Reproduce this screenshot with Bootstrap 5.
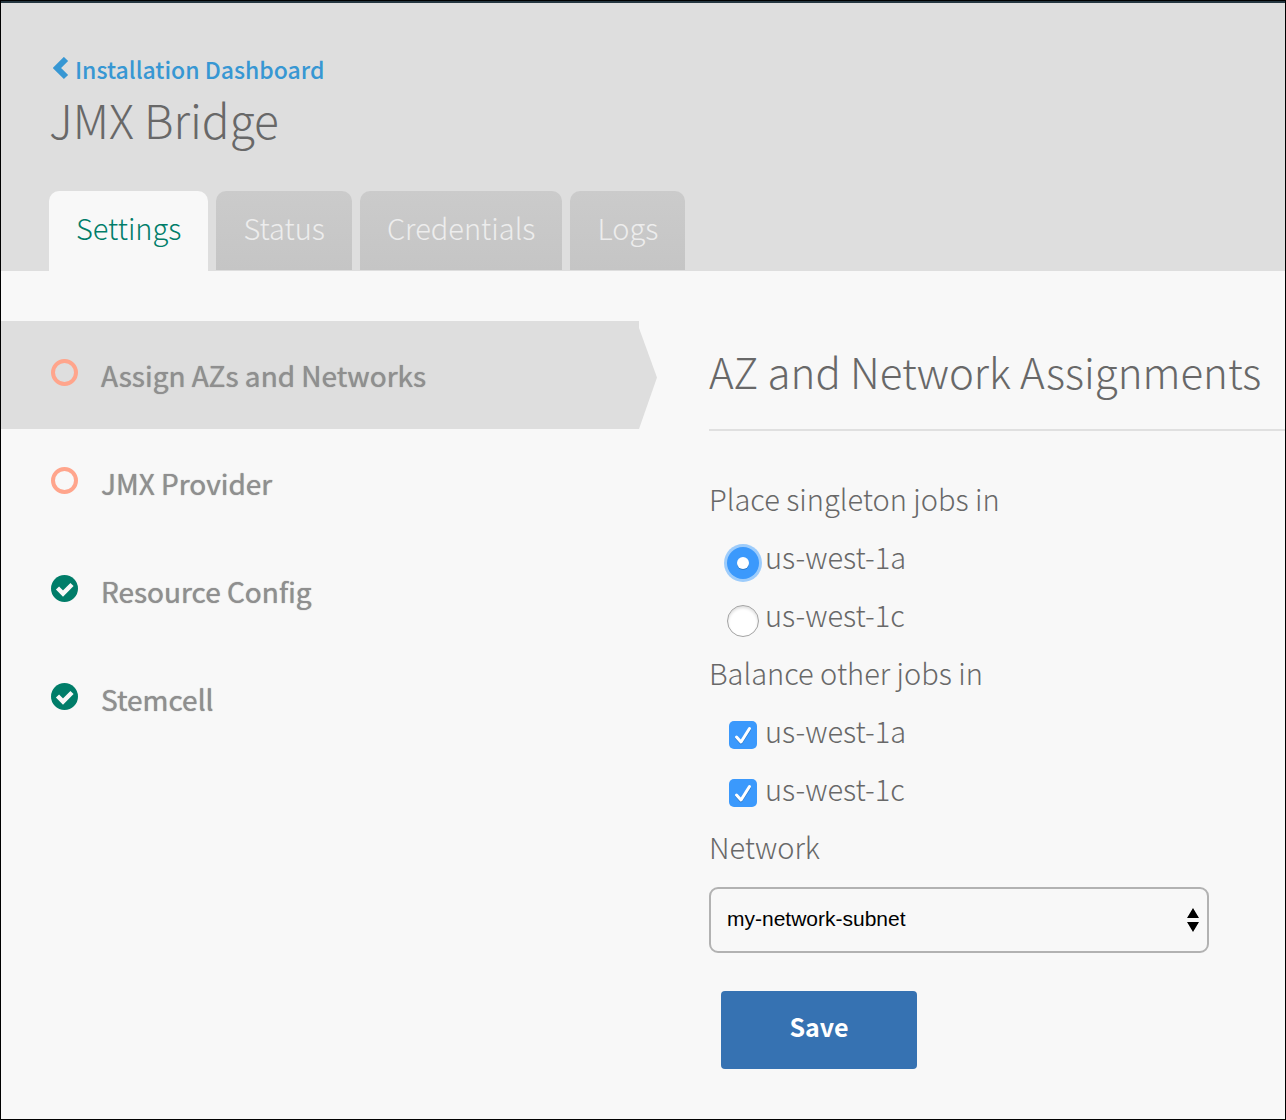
<!DOCTYPE html>
<html lang="en">
<head>
<meta charset="utf-8">
<meta name="viewport" content="width=device-width, initial-scale=1">
<title>JMX Bridge</title>
<link href="https://cdn.jsdelivr.net/npm/bootstrap@5.3.0/dist/css/bootstrap.min.css" rel="stylesheet">
<style>
  body {
    font-family: "Noto Sans CJK SC", "Open Sans", sans-serif;
    font-size: 29px;
    font-weight: 300;
    line-height: 58px;
    color: #686868;
    background: #f8f8f8;
    border: 1px solid #000;
    min-height: 100vh;
  }
  .page-head { background: #dedede; border-top: 2px solid #243640; padding: 48px 48px 0; }
  .back-link { color: #3797d3; font-size: 23px; font-weight: 500; line-height: 36px; gap: 6px; padding-left: 4px; }
  .page-title { font-size: 46px; font-weight: 300; line-height: 64px; margin: 0 0 40px; }
  .product-tabs { --bs-nav-tabs-border-width: 0; border: 0; gap: 8px; }
  .product-tabs .nav-link {
    line-height: 72px; padding: 0 27px 7px; margin-bottom: 1px;
    color: #ededed; background: linear-gradient(#cbcbcb, #c5c5c5); border-radius: 10px 10px 0 0;
  }
  .product-tabs .nav-link.active { color: #007d69; background: #f8f8f8; margin-bottom: 0; padding-bottom: 8px; }
  .page-body { padding-top: 50px; }
  .side-nav { padding-right: 4px; }
  .side-nav .nav-link {
    position: relative; height: 108px; padding: 0 50px; gap: 23px;
    font-size: 28px; font-weight: 400; color: #8f8f8f; text-shadow: 0 0 1px #8f8f8f;
  }
  .side-nav .nav-link svg { margin-bottom: 6px; }
  .side-nav .nav-link.active { background: #dedede; }
  .side-nav .nav-link.active::after {
    content: ""; position: absolute; left: 100%; top: 7px; bottom: 0; width: 18px;
    background: #dedede; clip-path: polygon(0 0, 100% 49%, 0 100%);
  }
  .form-pane { padding-left: 66px; }
  .pane-title { font-size: 42px; font-weight: 300; line-height: 100px; padding-bottom: 8px; border-bottom: 2px solid #e0e0e0; margin: 0 0 38px; white-space: nowrap; }
  .choice { height: 58px; padding-left: 15px; gap: 3px; }
  .choice-box { width: 38px; padding-top: 14px; }
  .choice .form-check-input { margin: 0; float: none; box-shadow: none; }
  .choice input[type=radio] { width: 32px; height: 32px; border: 1px solid #a3a3a3; background-color: #fff; box-shadow: inset 0 2px 3px #ddd; }
  .choice input[type=radio]:checked {
    border: 0; background-color: #3b99fc; box-shadow: 0 0 0 3px #9dccfb;
    background-image: url("data:image/svg+xml,%3csvg xmlns='http://www.w3.org/2000/svg' viewBox='0 0 32 32'%3e%3ccircle cx='16' cy='17' r='6' fill='%232f7bc9'/%3e%3ccircle cx='16' cy='16' r='6' fill='%23fff'/%3e%3c/svg%3e");
  }
  .choice input[type=checkbox] {
    width: 28px; height: 28px; border: 0; border-radius: 5px; background-color: #3b99fc;
    background-image: url("data:image/svg+xml,%3csvg xmlns='http://www.w3.org/2000/svg' viewBox='0 0 28 28' fill='none' stroke-width='3' stroke-linecap='round' stroke-linejoin='round'%3e%3cpath d='M7.500 17l4.500 5 8.500-13' stroke='%232f7bc9'/%3e%3cpath d='M7.500 16l4.500 5 8.500-13.500' stroke='%23fff'/%3e%3c/svg%3e");
  }
  .tick .choice-box { padding-top: 10px; }
  .network-select {
    max-width: 500px; height: 66px; margin-top: 12px; padding: 0 40px 2px 16px;
    font-family: "Liberation Sans", Arial, sans-serif; font-size: 21px; font-weight: 400; color: #000;
    border: 2px solid #b2b2b2; border-radius: 9px; background-color: #f8f8f8;
    background-image: url("data:image/svg+xml,%3csvg xmlns='http://www.w3.org/2000/svg' viewBox='0 0 12 24'%3e%3cpath d='M6 0l6 10H0zM6 24l6-10H0z'/%3e%3c/svg%3e");
    background-size: 12px 24px; background-position: right 8px center;
  }
  .save-btn {
    width: 196px; height: 78px; margin: 38px 12px 48px; padding: 0 0 6px;
    font-size: 25px; font-weight: 700; color: #fff; background: #3672b2; border: 0; border-radius: 4px;
  }
</style>
</head>
<body>
<header class="page-head">
  <div class="d-flex">
    <a class="back-link d-flex align-items-center text-decoration-none" href="#">
      <svg width="16" height="24" viewBox="0 0 16 24" fill="none" stroke="#3797d3" stroke-width="6" aria-hidden="true"><path d="M13 2L4 11l9 9"/></svg>
      <span>Installation Dashboard</span>
    </a>
  </div>
  <h1 class="page-title">JMX Bridge</h1>
  <ul class="nav nav-tabs product-tabs">
    <li class="nav-item"><a class="nav-link active" href="#" aria-current="page">Settings</a></li>
    <li class="nav-item"><a class="nav-link" href="#">Status</a></li>
    <li class="nav-item"><a class="nav-link" href="#">Credentials</a></li>
    <li class="nav-item"><a class="nav-link" href="#">Logs</a></li>
  </ul>
</header>
<div class="page-body row g-0">
  <aside class="col-6 side-nav">
    <nav class="nav flex-column">
      <a class="nav-link active d-flex align-items-center" href="#">
        <svg width="27" height="27" viewBox="0 0 27 27" aria-hidden="true"><circle cx="13.500" cy="13.500" r="11.500" fill="none" stroke="#ffa58c" stroke-width="4"/></svg>
        <span>Assign AZs and Networks</span></a>
      <a class="nav-link d-flex align-items-center" href="#">
        <svg width="27" height="27" viewBox="0 0 27 27" aria-hidden="true"><circle cx="13.500" cy="13.500" r="11.500" fill="none" stroke="#ffa58c" stroke-width="4"/></svg>
        <span>JMX Provider</span></a>
      <a class="nav-link d-flex align-items-center" href="#">
        <svg width="27" height="27" viewBox="0 0 27 27" aria-hidden="true"><circle cx="13.500" cy="13.500" r="13.500" fill="#007d69"/><path d="M6.500 13l5.500 5.500 9-9" fill="none" stroke="#f8f8f8" stroke-width="4.500"/></svg>
        <span>Resource Config</span></a>
      <a class="nav-link d-flex align-items-center" href="#">
        <svg width="27" height="27" viewBox="0 0 27 27" aria-hidden="true"><circle cx="13.500" cy="13.500" r="13.500" fill="#007d69"/><path d="M6.500 13l5.500 5.500 9-9" fill="none" stroke="#f8f8f8" stroke-width="4.500"/></svg>
        <span>Stemcell</span></a>
    </nav>
  </aside>
  <main class="col-6 form-pane">
    <h2 class="pane-title">AZ and Network Assignments</h2>
    <form>
      <div role="radiogroup" aria-labelledby="singleton">
        <div id="singleton">Place singleton jobs in</div>
        <div class="choice d-flex align-items-center"><span class="choice-box d-flex justify-content-center"><input class="form-check-input" type="radio" name="az" id="s1a" checked></span><label for="s1a">us-west-1a</label></div>
        <div class="choice d-flex align-items-center"><span class="choice-box d-flex justify-content-center"><input class="form-check-input" type="radio" name="az" id="s1c"></span><label for="s1c">us-west-1c</label></div>
      </div>
      <div role="group" aria-labelledby="balance">
        <div id="balance">Balance other jobs in</div>
        <div class="choice tick d-flex align-items-center"><span class="choice-box d-flex justify-content-center"><input class="form-check-input" type="checkbox" id="b1a" checked></span><label for="b1a">us-west-1a</label></div>
        <div class="choice tick d-flex align-items-center"><span class="choice-box d-flex justify-content-center"><input class="form-check-input" type="checkbox" id="b1c" checked></span><label for="b1c">us-west-1c</label></div>
      </div>
      <label class="d-block" for="network">Network</label>
      <select class="form-select network-select" id="network"><option>my-network-subnet</option></select>
      <button class="btn save-btn" type="submit">Save</button>
    </form>
  </main>
</div>
<script src="https://cdn.jsdelivr.net/npm/bootstrap@5.3.0/dist/js/bootstrap.bundle.min.js"></script>
</body>
</html>
